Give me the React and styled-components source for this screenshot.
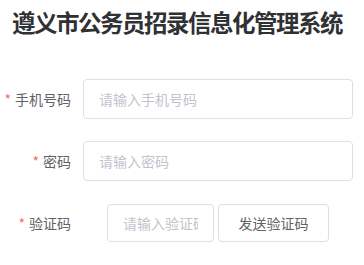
import React from "react";
import styled, { createGlobalStyle } from "styled-components";

const Global = createGlobalStyle`
  html, body { margin: 0; padding: 0; background: #fff; }
  body { font-family: "Noto Sans CJK SC", "Noto Sans", sans-serif; }
  * { box-sizing: border-box; }
`;

const Page = styled.div`
  width: 364px;
  height: 265px;
  padding-top: 9px;
  overflow: hidden;
`;

const Title = styled.h1`
  margin: 0 0 44px 12px;
  font-size: 23.5px;
  line-height: 26px;
  font-weight: 700;
  letter-spacing: -1.5px;
  color: #303133;
  white-space: nowrap;
`;

const Form = styled.form`
  display: flex;
  flex-direction: column;
  gap: 22px;
`;

const Row = styled.div`
  display: flex;
  align-items: center;
  height: 40px;
`;

const Label = styled.label`
  width: 83px;
  flex: none;
  padding-right: 12px;
  text-align: right;
  font-size: 14px;
  color: #606266;
  white-space: nowrap;
`;

const Star = styled.span`
  color: #f56c6c;
  margin-right: 4px;
`;

const Control = styled.div`
  width: 270px;
  display: flex;
  justify-content: ${(p) => (p.$center ? "center" : "flex-start")};
  gap: 4px;
`;

const Input = styled.input`
  width: ${(p) => p.$w || "100%"};
  height: ${(p) => p.$h || "40px"};
  border: 1px solid #dcdfe6;
  border-radius: 4px;
  padding: 0 15px;
  font-family: inherit;
  font-size: 14px;
  color: #606266;
  outline: none;
  background: #fff;
  &::placeholder { color: #c0c4cc; }
`;

const Button = styled.button`
  width: 111px;
  height: 38px;
  border: 1px solid #dcdfe6;
  border-radius: 4px;
  background: #fff;
  font-family: inherit;
  font-size: 14px;
  color: #606266;
  padding: 0;
`;

export default function App() {
  return (
    <Page>
      <Global />
      <Title>遵义市公务员招录信息化管理系统</Title>
      <Form>
        <Row>
          <Label><Star>*</Star>手机号码</Label>
          <Control>
            <Input placeholder="请输入手机号码" />
          </Control>
        </Row>
        <Row>
          <Label><Star>*</Star>密码</Label>
          <Control>
            <Input type="password" placeholder="请输入密码" />
          </Control>
        </Row>
        <Row>
          <Label><Star>*</Star>验证码</Label>
          <Control $center>
            <Input $w="107px" $h="38px" placeholder="请输入验证码" />
            <Button type="button">发送验证码</Button>
          </Control>
        </Row>
      </Form>
    </Page>
  );
}
